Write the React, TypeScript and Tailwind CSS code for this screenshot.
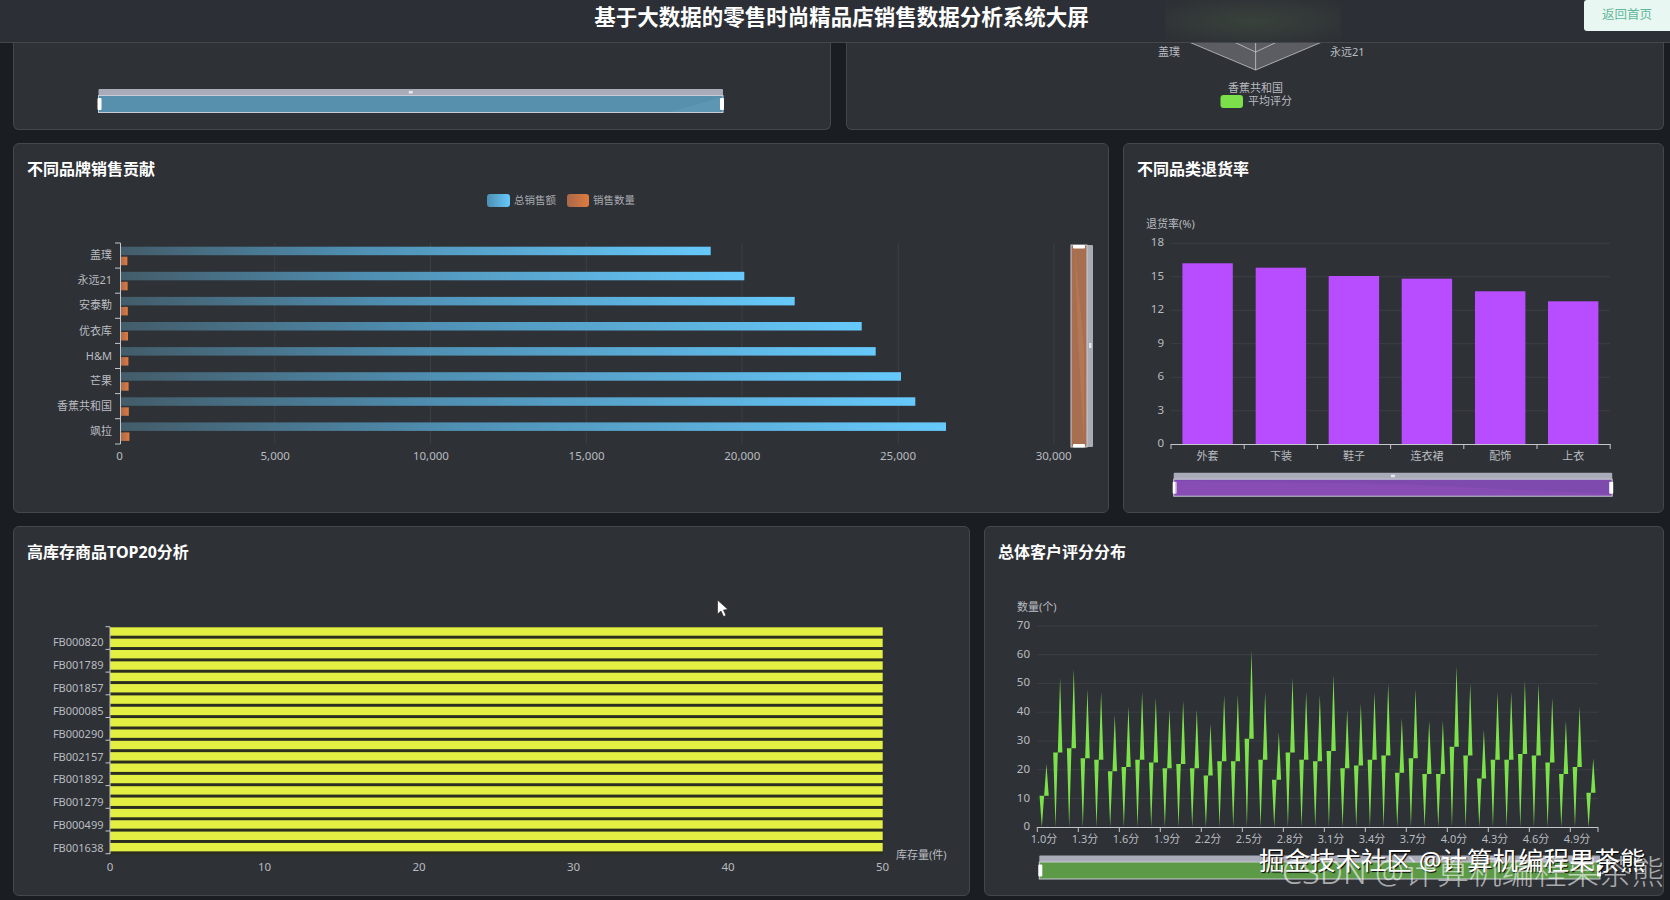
const grid = "#3c3f44";
const axis = "#c4c7cb";
const label = "text-[11px] fill-[#b9bcc0]";
const tick = "text-[11.5px] fill-[#b9bcc0]";

const brands = [
  { name: "盖璞", end: 710.7, qty: 127.4 },
  { name: "永远21", end: 744.3, qty: 127.6 },
  { name: "安泰勒", end: 794.7, qty: 127.8 },
  { name: "优衣库", end: 861.7, qty: 128 },
  { name: "H&M", end: 875.7, qty: 128.4 },
  { name: "芒果", end: 901, qty: 128.6 },
  { name: "香蕉共和国", end: 915.3, qty: 128.8 },
  { name: "飒拉", end: 946, qty: 129.4 },
];

const returns = [
  { name: "外套", x: 1182.4, top: 263.3 },
  { name: "下装", x: 1255.7, top: 267.7 },
  { name: "鞋子", x: 1328.7, top: 276 },
  { name: "连衣裙", x: 1401.7, top: 278.7 },
  { name: "配饰", x: 1475, top: 291.3 },
  { name: "上衣", x: 1548, top: 301.3 },
];

const skus = ["FB000820", "FB001789", "FB001857", "FB000085", "FB000290", "FB002157", "FB001892", "FB001279", "FB000499", "FB001638"];

const scores = [22, 52, 55, 48, 47, 39, 42, 47, 45, 41, 44, 41, 36, 46, 46, 61.5, 47, 33, 52, 47, 46, 53, 41, 43, 47, 50, 38, 48, 37, 37, 56, 50, 34, 47, 47, 51, 50, 45, 37, 42, 24];

// zoom strip under a chart
const Slider = ({ x, w, y, fill, mark }: { x: number; w: number; y: number; fill: string; mark?: boolean }) => (
  <g>
    <rect x={x} y={y} width={w} height={6.5} rx={1} fill="#a9acb8" />
    <rect x={x} y={y + 6.5} width={w} height={17} fill={fill} stroke="#c9ccd6" strokeWidth={1} />
    <rect x={x - 1} y={y + 9} width={4} height={12} rx={1} fill="#fff" />
    <rect x={x + w - 3} y={y + 9} width={4} height={12} rx={1} fill="#fff" />
    {mark && <rect x={x + w / 2 - 2} y={y + 2} width={4} height={2.5} fill="#e4e6ee" />}
  </g>
);

const Card = ({ title, children }: { title: string; children: React.ReactNode }) => (
  <section className="rounded-md border border-[#44474c] bg-[#2e3136] px-[13px] pt-[12px]">
    <h2 className="h-[27px] text-[16px] font-bold leading-[26px] text-white">{title}</h2>
    {children}
  </section>
);

const BrandChart = () => (
  <svg width={1068} height={327} viewBox="27 183 1068 327" className="block">
    <defs>
      <linearGradient id="blueBar">
        <stop offset="0" stopColor="#435c69" />
        <stop offset="0.4" stopColor="#4f8fb2" />
        <stop offset="1" stopColor="#66c9fb" />
      </linearGradient>
      <linearGradient id="orangeBar" x1="0" y1="0" x2="1" y2="0">
        <stop offset="0" stopColor="#a8694a" />
        <stop offset="1" stopColor="#e07a3f" />
      </linearGradient>
      <linearGradient id="blueKey">
        <stop offset="0" stopColor="#4f8fb2" />
        <stop offset="1" stopColor="#66c9fb" />
      </linearGradient>
    </defs>
    <rect x={487} y={194} width={23} height={13} rx={3} fill="url(#blueKey)" />
    <text x={514} y={203.5} className="text-[10.5px] fill-[#a9acb1]">总销售额</text>
    <rect x={567} y={194} width={22} height={13} rx={3} fill="url(#orangeBar)" />
    <text x={593} y={203.5} className="text-[10.5px] fill-[#a9acb1]">销售数量</text>
    {[274.8, 430.5, 586.3, 742, 898.3, 1054].map((x) => (
      <line key={x} x1={x} x2={x} y1={243} y2={444} stroke={grid} />
    ))}
    {brands.map((b, i) => {
      const y = 246.7 + i * 25.1;
      return (
        <g key={b.name}>
          <rect x={120.5} y={y} width={b.end - 120.5} height={8.5} fill="url(#blueBar)" />
          <rect x={120.5} y={y + 10} width={b.qty - 120.5} height={8.5} fill="url(#orangeBar)" />
          <text x={112} y={y + 12.5} textAnchor="end" className={label}>{b.name}</text>
          <line x1={115} x2={120.5} y1={243 + i * 25.1} y2={243 + i * 25.1} stroke={axis} />
        </g>
      );
    })}
    <line x1={115} x2={120.5} y1={444} y2={444} stroke={axis} />
    <line x1={120.5} x2={120.5} y1={243} y2={444} stroke={axis} />
    {["0", "5,000", "10,000", "15,000", "20,000", "25,000", "30,000"].map((t, i) => (
      <text key={t} x={119.5 + i * 155.7} y={460} textAnchor="middle" className={tick}>{t}</text>
    ))}
    <rect x={1071} y={245} width={22} height={202} rx={1} fill="#a9abb5" />
    <rect x={1071} y={245} width={16} height={202} fill="#a76f50" stroke="#c9ccd6" />
    <path d="M1075 250 L1084 350 L1084 442 L1078 340 Z" fill="#c08060" opacity="0.5" />
    <rect x={1073} y={245} width={12} height={3.5} rx={1} fill="#fff" />
    <rect x={1073} y={444} width={12} height={3.5} rx={1} fill="#fff" />
    <rect x={1089} y={343} width={2.5} height={5} fill="#e4e6ee" />
  </svg>
);

const ReturnChart = () => (
  <svg width={513} height={327} viewBox="1137 183 513 327" className="block">
    <text x={1146} y={228} className={label}>退货率(%)</text>
    {[0, 3, 6, 9, 12, 15, 18].map((v) => {
      const y = 444.3 - v * 11.17;
      return (
        <g key={v}>
          {v > 0 && <line x1={1171} x2={1610} y1={y} y2={y} stroke={grid} />}
          <text x={1164} y={y + 3} textAnchor="end" className={tick}>{v}</text>
        </g>
      );
    })}
    {returns.map((r) => (
      <g key={r.name}>
        <rect x={r.x} y={r.top} width={50.4} height={444.3 - r.top} fill="#b84dff" />
        <text x={r.x + 25.2} y={460} textAnchor="middle" className={label}>{r.name}</text>
      </g>
    ))}
    <line x1={1171} x2={1610.4} y1={444.5} y2={444.5} stroke={axis} />
    {[0, 1, 2, 3, 4, 5, 6].map((i) => (
      <line key={i} x1={1171 + i * 73.2} x2={1171 + i * 73.2} y1={444} y2={449} stroke={axis} />
    ))}
    <Slider x={1173.7} w={438.5} y={472.7} fill="#7f4aae" mark />
    <path d="M1175 481 L1400 484 L1500 489 L1610 494 L1610 495 L1175 495 Z" fill="#9a52c4" opacity="0.35" />
  </svg>
);

const StockChart = () => (
  <svg width={929} height={327} viewBox="27 566 929 327" className="block">
    {Array.from({ length: 20 }, (_, i) => (
      <g key={i}>
        <rect x={110} y={627.3 + i * 11.35} width={772.7} height={11.35} fill="#2a2d20" />
        <rect x={110} y={627.3 + i * 11.35} width={772.7} height={8.4} fill="#e3ef42" />
      </g>
    ))}
    {Array.from({ length: 11 }, (_, i) => (
      <line key={i} x1={105.5} x2={110} y1={626.7 + i * 22.7} y2={626.7 + i * 22.7} stroke={axis} />
    ))}
    <line x1={110} x2={110} y1={626.7} y2={854} stroke={axis} />
    {skus.map((s, i) => (
      <text key={s} x={103.5} y={646 + i * 22.9} textAnchor="end" className={label}>{s}</text>
    ))}
    {[0, 10, 20, 30, 40, 50].map((v, i) => (
      <text key={v} x={110 + i * 154.5} y={871} textAnchor="middle" className={tick}>{v}</text>
    ))}
    <text x={896} y={859} className={label}>库存量(件)</text>
    <path d="M717.5 600 L717.5 614 L721 611 L723.5 616.5 L726 615.5 L723.5 610 L728 609.5 Z" fill="#fff" stroke="#222" strokeWidth="0.6" />
  </svg>
);

const ScoreChart = () => (
  <svg width={652} height={327} viewBox="998 566 652 327" className="block">
    <text x={1017} y={611} className={label}>数量(个)</text>
    {[0, 10, 20, 30, 40, 50, 60, 70].map((v) => {
      const y = 827.3 - v * 2.877;
      return (
        <g key={v}>
          {v > 0 && <line x1={1037} x2={1598} y1={y} y2={y} stroke={grid} />}
          <text x={1030} y={y + 3} textAnchor="end" className={tick}>{v}</text>
        </g>
      );
    })}
    {scores.map((v, i) => {
      const cx = 1037.3 + (i + 0.5) * 13.67;
      const mid = 827.3 - (v / 2) * 2.877;
      const peak = 827.3 - v * 2.877;
      return (
        <path
          key={i}
          d={`M${cx - 4.6} ${mid} L${cx - 2.3} 827.3 L${cx} ${mid} Z M${cx} ${mid} L${cx + 2.3} ${peak} L${cx + 4.6} ${mid} Z`}
          fill="#7ce24a"
        />
      );
    })}
    <line x1={1037.3} x2={1598} y1={827.5} y2={827.5} stroke={axis} />
    {Array.from({ length: 14 }, (_, i) => (
      <g key={i}>
        <line x1={1037.3 + i * 41} x2={1037.3 + i * 41} y1={827} y2={832} stroke={axis} />
        <text x={1044 + i * 41} y={843} textAnchor="middle" className={label}>{(1 + i * 0.3).toFixed(1)}分</text>
      </g>
    ))}
    <line x1={1598} x2={1598} y1={827} y2={832} stroke={axis} />
    <Slider x={1039.3} w={560.7} y={855.5} fill="#5c9a47" />
  </svg>
);

const App = () => {
  return (
    <div className="relative h-[900px] w-[1670px] overflow-hidden bg-[#1a1d22] font-['Noto_Sans','Noto_Sans_CJK_SC',sans-serif]">
      <header className="relative z-10 flex h-[43px] items-center justify-center overflow-hidden border-b border-[#44474c] bg-[#2c2f35] pb-[8px] pl-[13px]">
        <div className="absolute left-[1165px] top-0 h-[42px] w-[176px] bg-[radial-gradient(ellipse_at_center,#38423b_0%,#333838_50%,#2c2f35_100%)]" />
        <h1 className="relative text-[21.5px] font-bold text-white">基于大数据的零售时尚精品店销售数据分析系统大屏</h1>
        <button className="absolute right-0 top-0 h-[31px] w-[86px] rounded-bl-[3px] rounded-tl-[3px] bg-[#e9f7f2] text-[12.5px] text-[#5fb89a]">返回首页</button>
      </header>

      <main className="flex flex-col gap-[13px] pl-[13px]">
        <div className="flex h-[87px] gap-[15px]">
          <section className="w-[818px] rounded-b-md border border-t-0 border-[#44474c] bg-[#2e3136]">
            <svg width={816} height={86} viewBox="14 43 816 86" className="block">
              <Slider x={98.5} w={624.5} y={89} fill="#5690ad" mark />
              <path d="M670 112 L720 98 L720 112 Z" fill="#6aa4c0" opacity="0.35" />
            </svg>
          </section>
          <section className="w-[818px] rounded-b-md border border-t-0 border-[#44474c] bg-[#2e3136]">
            <svg width={816} height={86} viewBox="847 43 816 86" className="block">
              <path d="M1189 42 L1255.6 70 L1322 42 Z" fill="#5b5d62" />
              <path d="M1189 42 L1255.6 70 L1322 42 M1234 42 L1255.6 52 L1277 42 M1255.6 42 L1255.6 70" fill="none" stroke="#c4c7cb" strokeWidth="0.8" />
              <text x={1158} y={56} className={label}>盖璞</text>
              <text x={1330} y={56} className={label}>永远21</text>
              <text x={1255.6} y={92} textAnchor="middle" className={label}>香蕉共和国</text>
              <rect x={1220.5} y={95} width={22.5} height={13} rx={3} fill="#7be04a" />
              <text x={1248} y={105} className={label}>平均评分</text>
            </svg>
          </section>
        </div>

        <div className="grid h-[370px] grid-cols-[1096px_541px] gap-[14px]">
          <Card title="不同品牌销售贡献"><BrandChart /></Card>
          <Card title="不同品类退货率"><ReturnChart /></Card>
        </div>

        <div className="grid h-[370px] grid-cols-[957px_680px] gap-[14px]">
          <Card title="高库存商品TOP20分析"><StockChart /></Card>
          <Card title="总体客户评分分布"><ScoreChart /></Card>
        </div>
      </main>

      <div className="absolute left-[1259px] top-[842px] z-20 whitespace-nowrap text-[25.5px] leading-[36px] text-white [text-shadow:1px_1px_1px_#000]">掘金技术社区 @计算机编程果茶熊</div>
      <div className="absolute right-[6px] top-[852px] z-20 whitespace-nowrap text-[32.5px] font-light leading-[40px] text-white/60">CSDN @计算机编程果茶熊</div>
    </div>
  );
};

export default App;
